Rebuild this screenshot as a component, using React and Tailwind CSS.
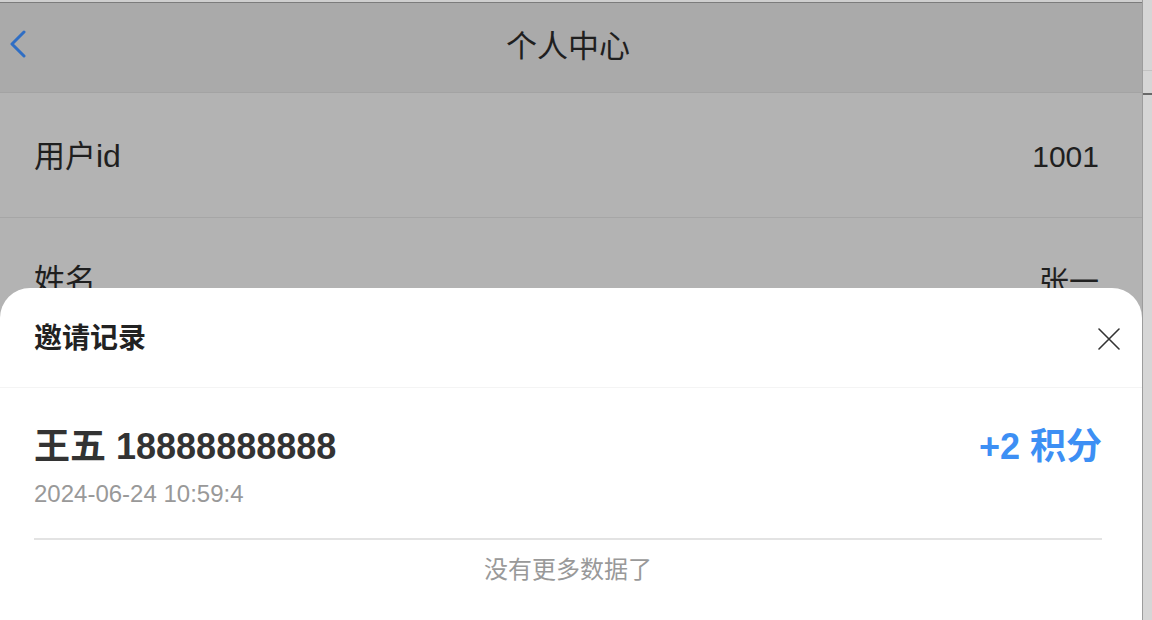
import React from 'react';

const font = { fontFamily: '"Liberation Sans", "Noto Sans CJK SC", sans-serif' };

// Back chevron in the page header
function BackIcon() {
  return (
    <svg width="20" height="30" viewBox="0 0 20 30" fill="none">
      <path d="M16 2 L4 14 L16 26" stroke="#2f6ec4" strokeWidth="3" strokeLinecap="round" strokeLinejoin="round" />
    </svg>
  );
}

function CloseIcon() {
  return (
    <svg width="22" height="22" viewBox="0 0 22 22" fill="none">
      <path d="M1 1 L21 21 M21 1 L1 21" stroke="#333" strokeWidth="1.6" strokeLinecap="round" />
    </svg>
  );
}

export default function App() {
  const profile = [
    { label: '用户id', value: '1001' },
    { label: '姓名', value: '张一' },
  ];

  const records = [
    { name: '王五', phone: '18888888888', time: '2024-06-24 10:59:4', points: 2 },
  ];

  return (
    <div className="w-[1152px] h-[620px] overflow-hidden flex bg-white" style={font}>
      {/* page under the mask */}
      <div className="relative w-[1142px] h-full flex flex-col bg-[#b3b3b3]">
        <div className="h-[2px] bg-[#cfcfcf]" />
        <div className="h-px bg-[#7c7c7c]" />
        <div className="relative h-[90px] bg-[#aaaaaa] border-b border-[#a3a3a3] flex items-center justify-center">
          <div className="absolute left-[8px] top-[27px]">
            <BackIcon />
          </div>
          <span className="text-[31px] text-[#1f1f1f] pr-[6px]">个人中心</span>
        </div>
        {profile.map((row) => (
          <div
            key={row.label}
            className="h-[125px] shrink-0 border-b border-[#a6a6a6] flex items-center justify-between pl-[34px] pr-[43px] pt-[3px] text-[30px] text-[#1f1f1f]"
          >
            <span>
              <span className="text-[31px]">{row.label.replace('id', '')}</span>
              {row.label.includes('id') ? <span className="text-[32px]">id</span> : null}
            </span>
            <span>{row.value}</span>
          </div>
        ))}

        {/* invite record sheet */}
        <div className="absolute left-0 right-0 top-[288px] bottom-0 bg-white rounded-t-[30px] flex flex-col">
          <div className="h-[100px] shrink-0 flex items-center justify-between pl-[34px] pr-[22px] pt-[2px] border-b border-[#f4f4f4]">
            <span className="text-[28px] font-bold text-[#222]">邀请记录</span>
            <CloseIcon />
          </div>
          <div className="ml-[34px] mr-[40px]">
            {records.map((r) => (
              <div key={r.phone} className="pt-[37px] pb-[29px] border-b-2 border-[#e3e3e3]">
                <div className="flex items-center justify-between h-[44px]">
                  <span className="text-[36px] font-bold text-[#333]">
                    {r.name} {r.phone}
                  </span>
                  <span className="text-[36px] font-bold text-[#3d8ff4]">+{r.points} 积分</span>
                </div>
                <div className="mt-[10px] h-[30px] leading-[30px] text-[24px] text-[#999]">{r.time}</div>
              </div>
            ))}
            <div className="pt-[13px] h-[34px] leading-[34px] text-center text-[24px] text-[#999] box-content">
              没有更多数据了
            </div>
          </div>
        </div>
      </div>

      {/* window edge on the right */}
      <div className="w-[10px] h-full flex flex-col bg-[#d6d6d6] border-l border-[#9c9c9c]">
        <div className="h-[70px]" />
        <div className="h-px bg-[#c2c2c2]" />
        <div className="h-[22px]" />
        <div className="h-[2px] bg-[#686868]" />
      </div>
    </div>
  );
}
